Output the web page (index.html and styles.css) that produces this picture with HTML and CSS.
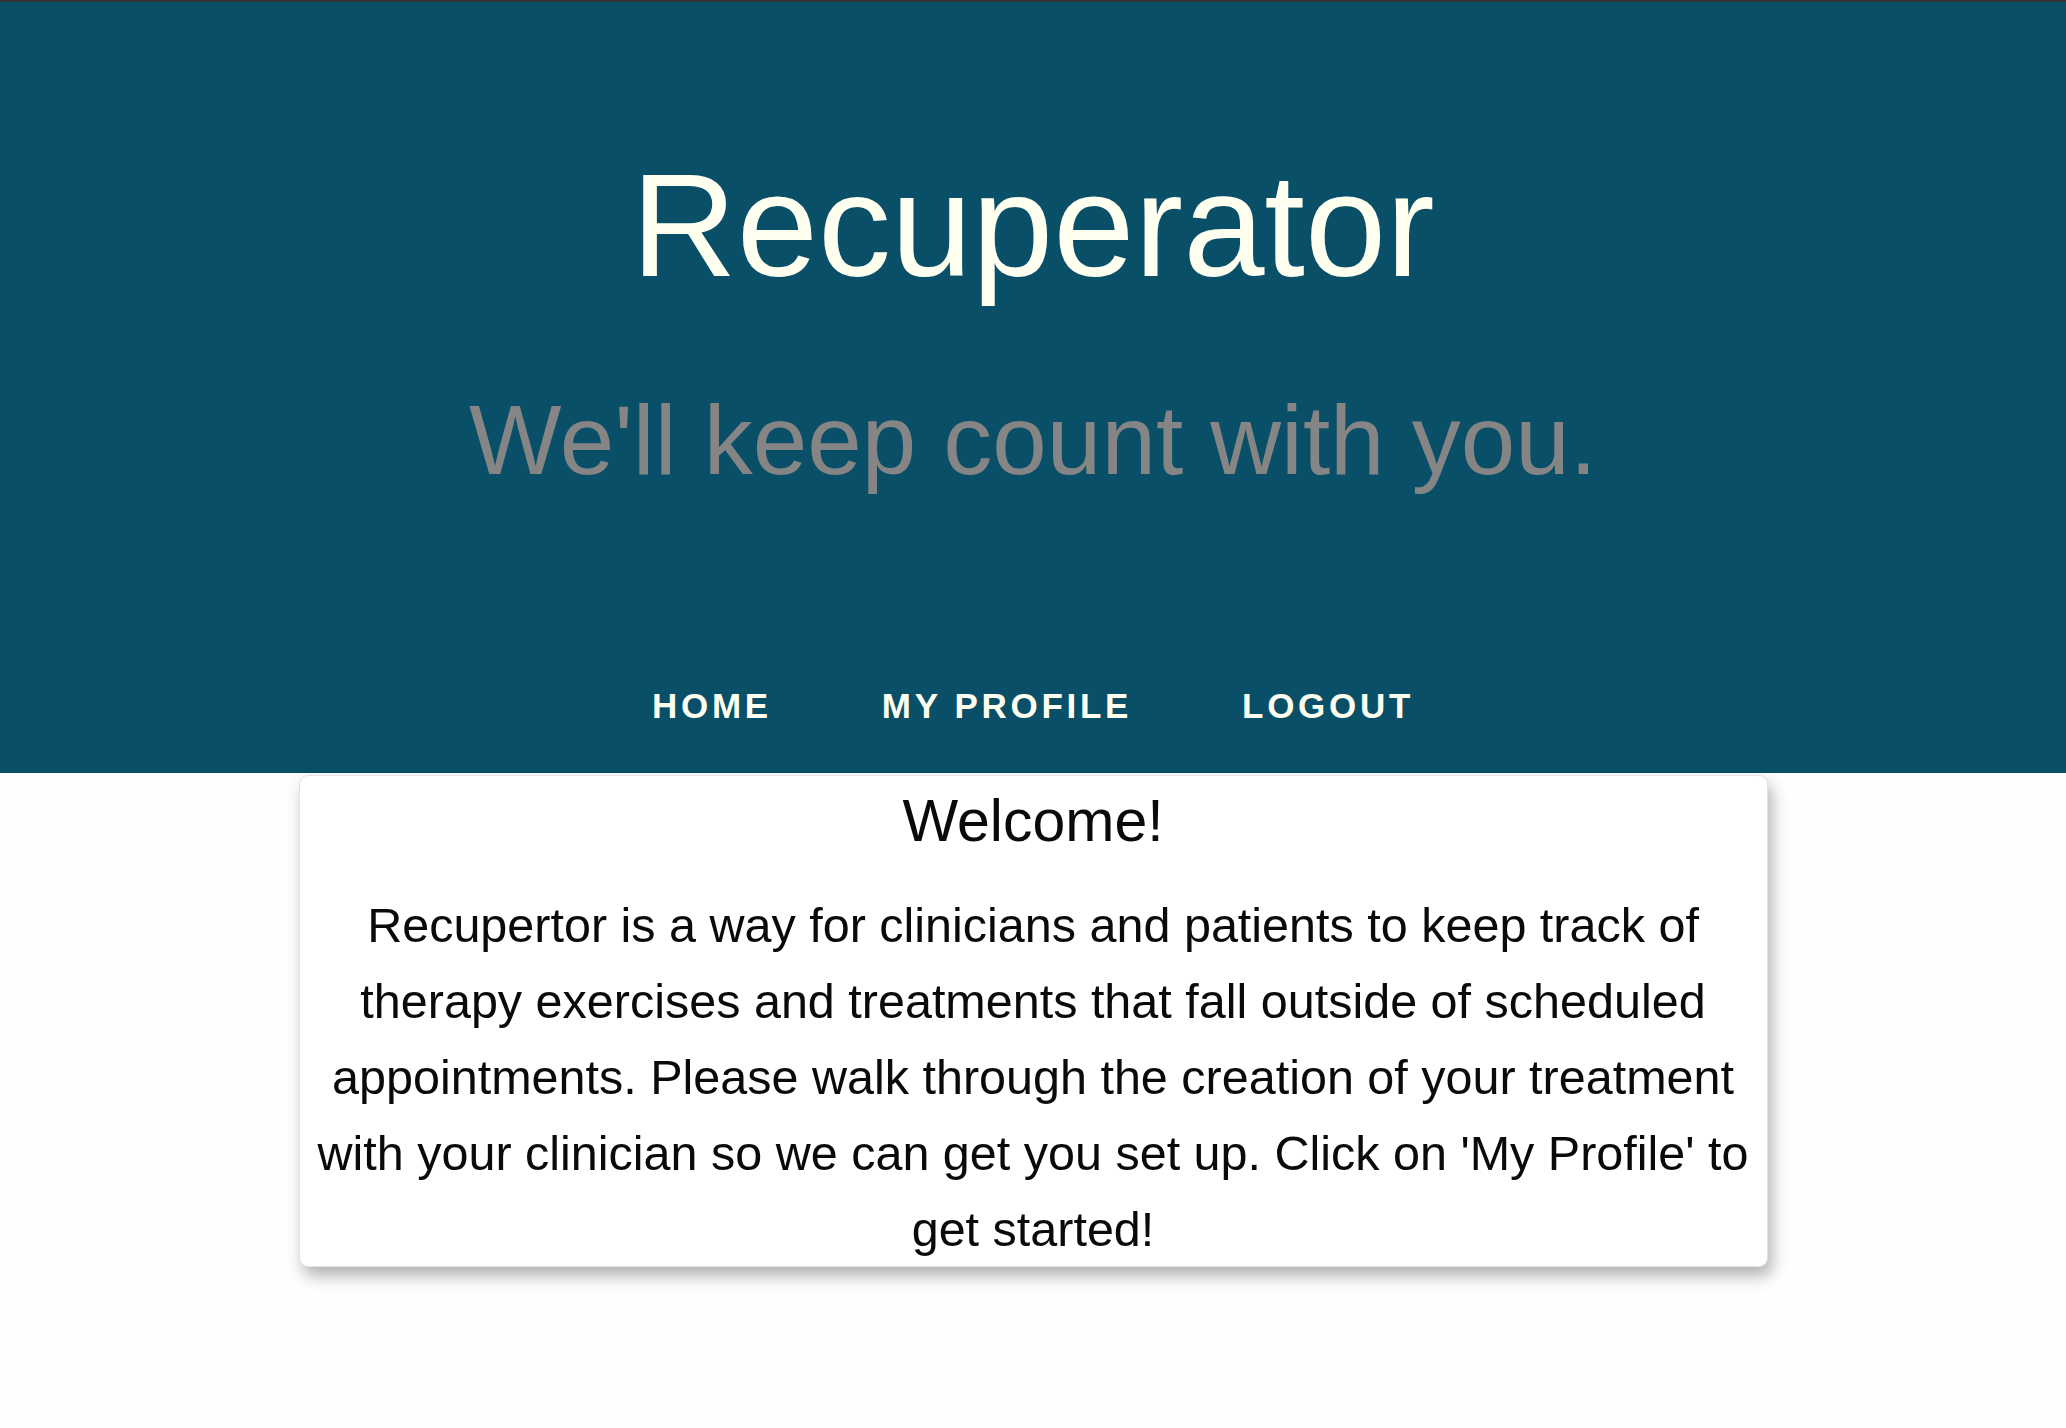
FILE: index.html
```html
<!DOCTYPE html>
<html lang="en">
<head>
<meta charset="utf-8">
<title>Recuperator</title>
<link rel="stylesheet" href="styles.css">
</head>
<body>
<header class="hero">
  <h1 class="hero-title">Recuperator</h1>
  <p class="hero-tagline">We'll keep count with you.</p>
  <nav class="nav">
    <a class="nav-link" href="#">HOME</a>
    <a class="nav-link" href="#">MY PROFILE</a>
    <a class="nav-link" href="#">LOGOUT</a>
  </nav>
</header>
<main class="content">
  <section class="card">
    <h2 class="card-title">Welcome!</h2>
    <p class="card-text">Recupertor is a way for clinicians and patients to keep track of therapy exercises and treatments that fall outside of scheduled appointments. Please walk through the creation of your treatment with your clinician so we can get you set up. Click on 'My Profile' to get started!</p>
  </section>
</main>
</body>
</html>
```
FILE: styles.css
```css
html, body {
  margin: 0;
  padding: 0;
  background: #fefefe;
}
body {
  font-family: "Liberation Sans", Arial, Helvetica, sans-serif;
  color: #0a0a0a;
}
.hero {
  background: #094f68;
  border-top: 2px solid #333333;
  padding: 144px 0 47px;
  text-align: center;
}
.hero-title {
  margin: 0;
  font-size: 146px;
  line-height: 160px;
  font-weight: 400;
  color: #fffff0;
}
.hero-tagline {
  margin: 79px 0 0;
  font-size: 98px;
  line-height: 110px;
  color: #858585;
}
.nav {
  margin-top: 191px;
  display: flex;
  justify-content: center;
  gap: 110px;
}
.nav-link {
  font-size: 35px;
  line-height: 40px;
  font-weight: 700;
  letter-spacing: 3.7px;
  color: #fffff0;
  text-decoration: none;
}
.content {
  padding: 2px 0 80px;
}
.card {
  width: 1469px;
  box-sizing: border-box;
  margin: 0 auto;
  padding: 12px 3px 0;
  background: #ffffff;
  border: 1px solid #e2e2e2;
  border-radius: 9px;
  box-shadow: 4px 9px 16px rgba(0, 0, 0, 0.3);
  text-align: center;
}
.card-title {
  margin: 0;
  font-size: 59px;
  line-height: 66px;
  font-weight: 400;
}
.card-text {
  margin: 33px 0 -1px;
  font-size: 48.5px;
  line-height: 76px;
}
```
